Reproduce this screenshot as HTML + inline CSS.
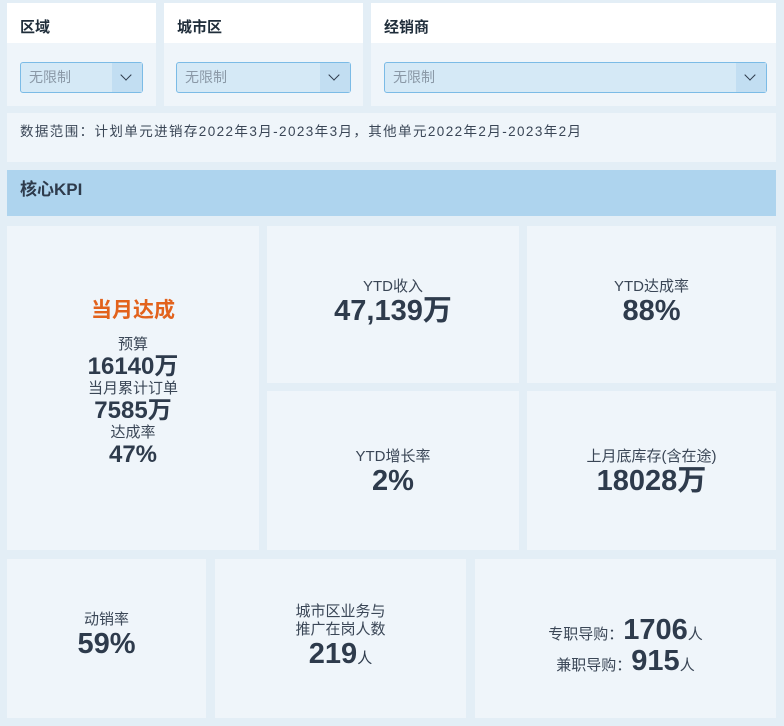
<!DOCTYPE html><html><head><meta charset="utf-8"><style>
body{margin:0;width:784px;height:726px;background:#e3eef6;font-family:"Liberation Sans","Noto Sans CJK SC",sans-serif;color:#2e3b4c;position:relative;overflow:hidden}
.c{position:absolute;background:#eff5fa}
.hd{background:#fff;height:40px;font-size:15px;font-weight:bold;padding-left:13px;line-height:50px;color:#1f2d3a}
.sel{position:absolute;top:59px;height:31px;border:1px solid #7bbbe6;border-radius:3px;background:#d5e9f6;font-size:14px;color:#8a98a6;line-height:29px;box-sizing:border-box;padding-left:8px}
.sel b{position:absolute;right:0;top:0;width:30px;height:29px;background:#c2def2}
.sel b:after{content:"";position:absolute;left:10px;top:8px;width:7px;height:7px;border-right:1.5px solid #2e3b4c;border-bottom:1.5px solid #2e3b4c;transform:rotate(45deg)}
.ctr{display:flex;flex-direction:column;align-items:center;justify-content:center;text-align:center}
.l{font-size:15px;color:#3a4656;line-height:18px}
.v{font-size:29px;font-weight:bold;line-height:31px}
</style></head><body>
<div class="c" style="left:7px;top:3px;width:149px;height:103px"><div class="hd">区域</div><div class="sel" style="left:13px;width:123px">无限制<b></b></div></div>
<div class="c" style="left:164px;top:3px;width:199px;height:103px"><div class="hd">城市区</div><div class="sel" style="left:12px;width:175px">无限制<b></b></div></div>
<div class="c" style="left:371px;top:3px;width:405px;height:103px"><div class="hd">经销商</div><div class="sel" style="left:13px;width:383px">无限制<b></b></div></div>
<div class="c" style="left:7px;top:113px;width:769px;height:49px;font-size:13.5px;letter-spacing:1.4px;padding-left:13px;line-height:38px;box-sizing:border-box;color:#3a4656">数据范围：计划单元进销存2022年3月-2023年3月，其他单元2022年2月-2023年2月</div>
<div class="c" style="left:7px;top:170px;width:769px;height:46px;background:#aed4ee;font-size:17px;font-weight:bold;padding-left:13px;line-height:40px;box-sizing:border-box">核心KPI</div>
<div class="c ctr" style="left:7px;top:226px;width:252px;height:324px;padding-bottom:14px;box-sizing:border-box"><div style="color:#e2621c;font-size:21px;font-weight:bold;margin-bottom:12px">当月达成</div><div class="l">预算</div><div class="v" style="font-size:24px;line-height:26px">16140万</div><div class="l">当月累计订单</div><div class="v" style="font-size:24px;line-height:26px">7585万</div><div class="l">达成率</div><div class="v" style="font-size:24px;line-height:26px">47%</div></div>
<div class="c ctr" style="left:267px;top:226px;width:252px;height:157px;padding-bottom:4px;box-sizing:border-box"><div class="l">YTD收入</div><div class="v">47,139万</div></div>
<div class="c ctr" style="left:527px;top:226px;width:249px;height:157px;padding-bottom:4px;box-sizing:border-box"><div class="l">YTD达成率</div><div class="v">88%</div></div>
<div class="c ctr" style="left:267px;top:391px;width:252px;height:159px;padding-top:4px;box-sizing:border-box"><div class="l">YTD增长率</div><div class="v">2%</div></div>
<div class="c ctr" style="left:527px;top:391px;width:249px;height:159px;padding-top:4px;box-sizing:border-box"><div class="l">上月底库存(含在途)</div><div class="v">18028万</div></div>
<div class="c ctr" style="left:7px;top:559px;width:199px;height:159px;padding-bottom:6px;box-sizing:border-box"><div class="l">动销率</div><div class="v">59%</div></div>
<div class="c ctr" style="left:215px;top:559px;width:251px;height:159px;box-sizing:border-box"><div class="l">城市区业务与</div><div class="l">推广在岗人数</div><div class="v">219<span style="font-size:15px;font-weight:normal">人</span></div></div>
<div class="c ctr" style="left:475px;top:559px;width:301px;height:159px;padding-top:14px;box-sizing:border-box"><div><span class="l">专职导购：</span><span class="v">1706</span><span class="l">人</span></div><div><span class="l">兼职导购：</span><span class="v">915</span><span class="l">人</span></div></div>
</body></html>
